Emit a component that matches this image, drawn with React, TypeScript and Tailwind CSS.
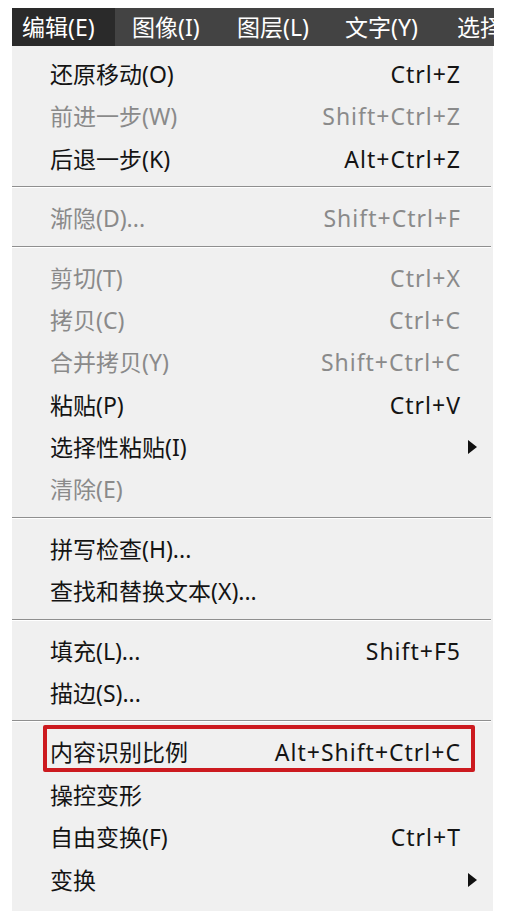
import React from "react";

type Item = { label: string; shortcut?: string; disabled?: boolean; sub?: boolean; highlight?: boolean };
type Entry = Item | "sep";

const entries: Entry[] = [
  { label: "还原移动(O)", shortcut: "Ctrl+Z" },
  { label: "前进一步(W)", shortcut: "Shift+Ctrl+Z", disabled: true },
  { label: "后退一步(K)", shortcut: "Alt+Ctrl+Z" },
  "sep",
  { label: "渐隐(D)...", shortcut: "Shift+Ctrl+F", disabled: true },
  "sep",
  { label: "剪切(T)", shortcut: "Ctrl+X", disabled: true },
  { label: "拷贝(C)", shortcut: "Ctrl+C", disabled: true },
  { label: "合并拷贝(Y)", shortcut: "Shift+Ctrl+C", disabled: true },
  { label: "粘贴(P)", shortcut: "Ctrl+V" },
  { label: "选择性粘贴(I)", sub: true },
  { label: "清除(E)", disabled: true },
  "sep",
  { label: "拼写检查(H)..." },
  { label: "查找和替换文本(X)..." },
  "sep",
  { label: "填充(L)...", shortcut: "Shift+F5" },
  { label: "描边(S)..." },
  "sep",
  { label: "内容识别比例", shortcut: "Alt+Shift+Ctrl+C", highlight: true },
  { label: "操控变形" },
  { label: "自由变换(F)", shortcut: "Ctrl+T" },
  { label: "变换", sub: true },
];

const font = { fontFamily: '"Noto Sans", "Noto Sans CJK SC", sans-serif' };

export default function App() {
  return (
    <div className="w-[506px] h-[918px] bg-white pt-[8px] pl-[12px]" style={font}>
      <div className="w-[482px] flex flex-col">
        <div className="h-[38px] bg-[#434343] flex items-center text-white text-[23px] overflow-hidden whitespace-nowrap">
          <div className="h-full w-[103px] shrink-0 bg-[#2a2a2a] flex items-center pl-[10px]">编辑(E)</div>
          <div className="pl-[17px] w-[122px] shrink-0">图像(I)</div>
          <div className="w-[108px] shrink-0">图层(L)</div>
          <div className="w-[112px] shrink-0">文字(Y)</div>
          <div className="shrink-0">选择</div>
        </div>
        <div className="w-[481px] bg-[#f0f0f0] pt-[7px] pb-[10px]">
          {entries.map((e, i) =>
            e === "sep" ? (
              <div key={i} className="h-[17px] pt-[6px]">
                <div className="h-[1px] bg-[#8f8f8f] w-[479px]" />
                <div className="h-[1px] bg-white w-[479px]" />
              </div>
            ) : (
              <div
                key={i}
                className={
                  "relative h-[42.4px] flex items-center pl-[38px] pr-[33px] text-[23px] whitespace-nowrap " +
                  (e.disabled ? "text-[#8a8a8a]" : "text-[#141414]")
                }
              >
                <span className="flex-1">{e.label}</span>
                {e.shortcut && <span className="tracking-[1px] mr-[-1px]">{e.shortcut}</span>}
                {e.sub && (
                  <svg className="absolute right-[16px] top-1/2 -translate-y-1/2" width="9" height="14" viewBox="0 0 9 14">
                    <polygon points="0,0 9,7 0,14" fill="#111" />
                  </svg>
                )}
                {e.highlight && (
                  <div className="absolute left-[31px] right-[18px] top-[-6px] bottom-[2px] border-[4px] border-[#cc1a1f] rounded-[2px]" />
                )}
              </div>
            )
          )}
        </div>
      </div>
    </div>
  );
}
